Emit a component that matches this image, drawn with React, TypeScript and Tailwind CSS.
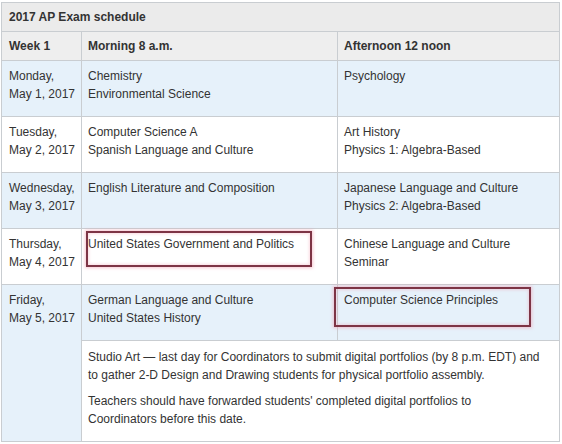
import React from "react";

const blue = "bg-[#e6f1fa]";

function Box({ className }: { className: string }) {
  return (
    <div
      className={`pointer-events-none absolute border-2 border-[#7d3445] shadow-[0_0_3px_1px_rgba(240,150,170,0.55),inset_0_0_3px_1px_rgba(240,150,170,0.35)] ${className}`}
    />
  );
}

export default function App() {
  const cell = "border border-[#c9cdd1] align-top px-[6px] pt-[6px] leading-[18px]";
  const day = "border border-[#c9cdd1] align-top pl-[7px] pr-0 pt-[6px] leading-[18px] whitespace-nowrap";
  return (
    <div
      className="w-[562px] h-[444px] bg-white pt-[2px] pl-[1px] text-[12px] text-[#333]"
      style={{ fontFamily: '"Liberation Sans", Arial, sans-serif' }}
    >
      <table className="border-collapse table-fixed w-[558px]">
        <colgroup>
          <col className="w-[80px]" />
          <col className="w-[256px]" />
          <col className="w-[222px]" />
        </colgroup>
        <tbody>
          <tr className="h-[29px] bg-[#ebebeb]">
            <td colSpan={3} className="border border-[#c9cdd1] px-[7px] font-bold align-middle">
              2017 AP Exam schedule
            </td>
          </tr>
          <tr className="h-[29px] bg-[#eeeeee] font-bold">
            <td className="border border-[#c9cdd1] px-[7px] align-middle">Week 1</td>
            <td className="border border-[#c9cdd1] px-[6px] align-middle">Morning 8 a.m.</td>
            <td className="border border-[#c9cdd1] px-[6px] align-middle">Afternoon 12 noon</td>
          </tr>
          <tr className={`h-[56px] ${blue}`}>
            <td className={day}>Monday,<br />May 1, 2017</td>
            <td className={cell}>Chemistry<br />Environmental Science</td>
            <td className={cell}>Psychology</td>
          </tr>
          <tr className="h-[56px] bg-white">
            <td className={day}>Tuesday,<br />May 2, 2017</td>
            <td className={cell}>Computer Science A<br />Spanish Language and Culture</td>
            <td className={cell}>Art History<br />Physics 1: Algebra-Based</td>
          </tr>
          <tr className={`h-[56px] ${blue}`}>
            <td className={day}>Wednesday,<br />May 3, 2017</td>
            <td className={cell}>English Literature and Composition</td>
            <td className={cell}>Japanese Language and Culture<br />Physics 2: Algebra-Based</td>
          </tr>
          <tr className="h-[56px] bg-white">
            <td className={day}>Thursday,<br />May 4, 2017</td>
            <td className={`${cell} relative`}>
              <Box className="left-[4px] top-[2px] w-[226px] h-[36px]" />
              United States Government and Politics
            </td>
            <td className={cell}>Chinese Language and Culture<br />Seminar</td>
          </tr>
          <tr className={`h-[56px] ${blue}`}>
            <td rowSpan={2} className={day}>Friday,<br />May 5, 2017</td>
            <td className={cell}>German Language and Culture<br />United States History</td>
            <td className={`${cell} relative`}>
              <Box className="left-[-4px] top-[2px] w-[197px] h-[40px]" />
              Computer Science Principles
            </td>
          </tr>
          <tr className="h-[101px] bg-white">
            <td colSpan={2} className={`${cell} pt-[7px] pr-[16px]`}>
              <p>
                Studio Art — last day for Coordinators to submit digital portfolios (by 8 p.m. EDT) and
                to gather 2-D Design and Drawing students for physical portfolio assembly.
              </p>
              <p className="mt-[8px]">
                Teachers should have forwarded students' completed digital portfolios to
                Coordinators before this date.
              </p>
            </td>
          </tr>
        </tbody>
      </table>
    </div>
  );
}
